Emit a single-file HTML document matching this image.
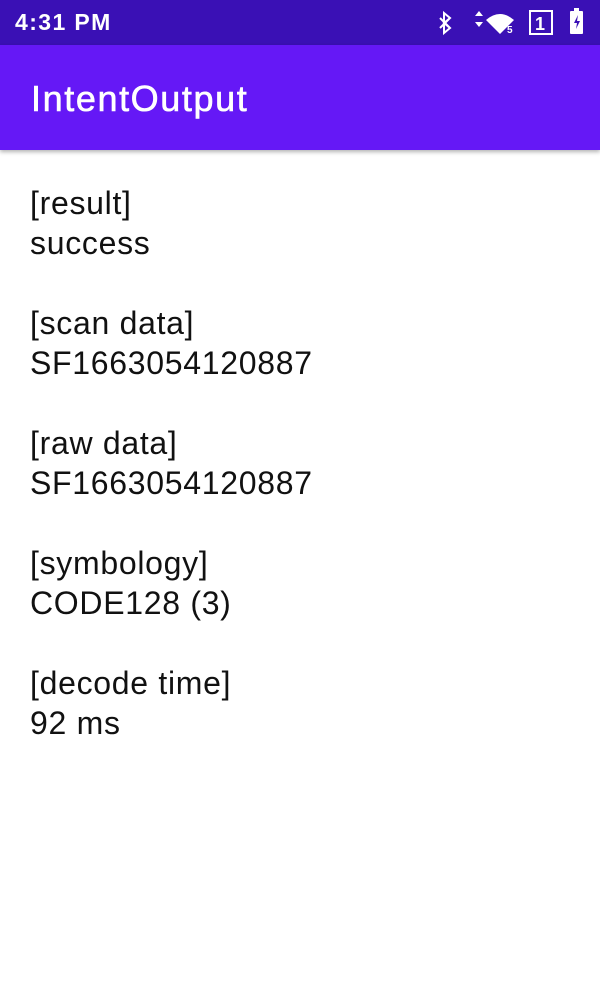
<!DOCTYPE html>
<html><head><style>
body{margin:0;width:600px;height:1000px;background:#fff;font-family:"Liberation Sans",sans-serif;overflow:hidden;position:relative}
.sb{position:absolute;top:0;left:0;width:600px;height:45px;background:#3a10b5;color:#fff}
.sb .t{position:absolute;left:15px;top:9px;font-size:23px;font-weight:bold;letter-spacing:1.4px}
.ab{position:absolute;top:45px;left:0;width:600px;height:105px;background:#6518f6;box-shadow:0 2px 4px rgba(0,0,0,.3)}
.ab div{position:absolute;left:31px;top:33px;color:#fff;font-size:36px;letter-spacing:1.6px;-webkit-text-stroke:0.6px #fff}
.c{position:absolute;top:183px;left:30px;font-size:32px;line-height:40px;color:#111;letter-spacing:0.7px}
</style></head><body>
<div class="sb"><div class="t">4:31 PM</div>
<svg width="180" height="45" style="position:absolute;left:420px;top:0" viewBox="0 0 180 45" fill="#fff">
<path d="M24 13l6 5-6 5 6 5-6 5V13zM20 18l10 10M20 28l10-10" stroke="#fff" stroke-width="2" fill="none"/>
<path d="M59 11l4 5h-8zM59 27l4-5h-8z"/>
<path d="M66 20q14-12 28 0l-14 14z"/>
<text x="87" y="33" font-size="10" font-family="Liberation Sans" font-weight="bold">5</text>
<rect x="110" y="11" width="22" height="23" fill="none" stroke="#fff" stroke-width="2"/>
<text x="115" y="30" font-size="18" font-family="Liberation Sans" font-weight="bold">1</text>
<rect x="150" y="11" width="13" height="23" rx="1"/><rect x="154" y="8" width="5" height="4"/>
<path d="M158 15l-4 8h3l-1 6 4-8h-3z" fill="#3a10b5"/>
</svg></div>
<div class="ab"><div>IntentOutput</div></div>
<div class="c">[result]<br>success<br><br>[scan data]<br>SF1663054120887<br><br>[raw data]<br>SF1663054120887<br><br>[symbology]<br>CODE128 (3)<br><br>[decode time]<br>92 ms</div>
</body></html>
